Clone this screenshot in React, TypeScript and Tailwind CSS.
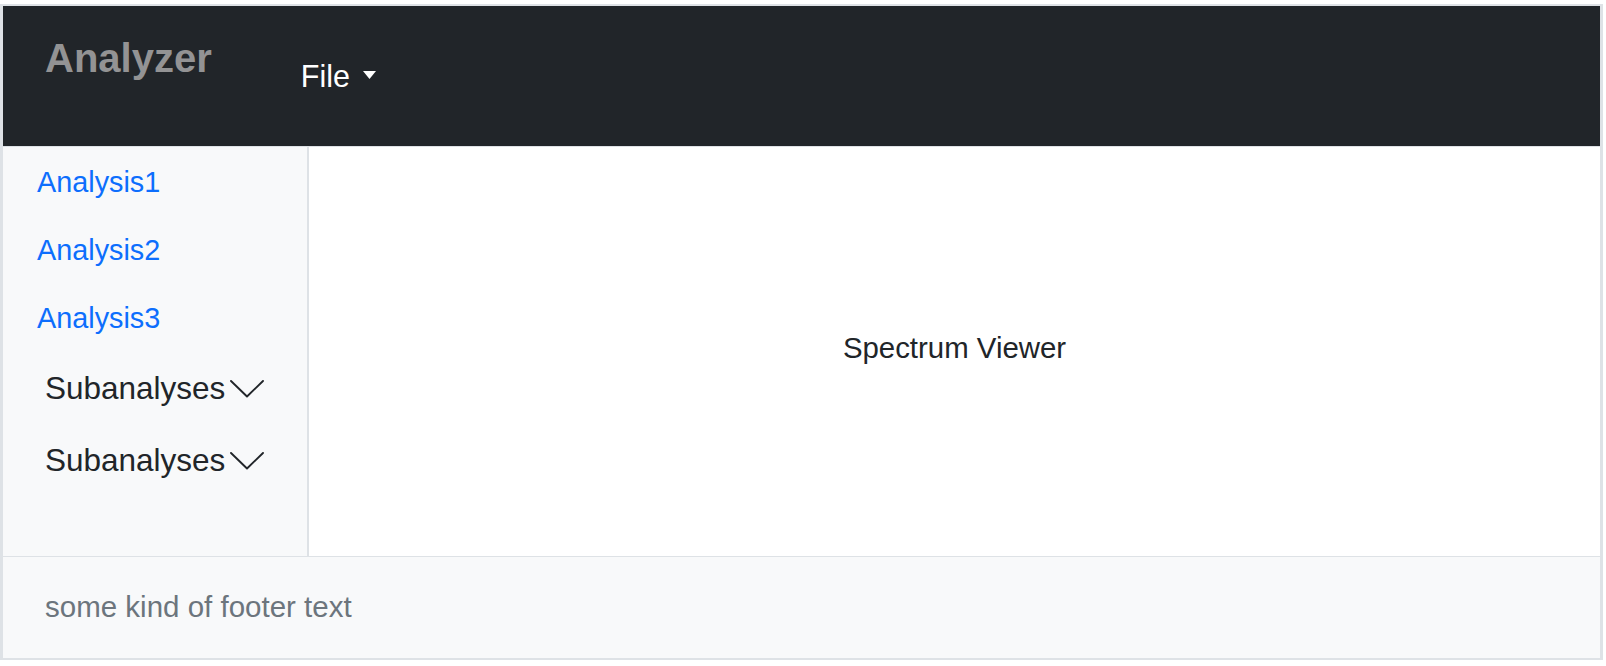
import React from "react";

function Chevron() {
  return (
    <svg width="34" height="18" viewBox="0 0 34 18" fill="none" className="ml-[5px]">
      <path d="M1 1 L17 16.5 L33 1" stroke="#212529" strokeWidth="1.9" strokeLinecap="round" strokeLinejoin="round" />
    </svg>
  );
}

export default function App() {
  const font = { fontFamily: '"Liberation Sans", Arial, Helvetica, sans-serif' };
  return (
    <div className="w-[1606px] h-[666px] bg-white" style={font}>
      <div className="mt-[4px] w-[1603px] border-x-[3px] border-y-2 border-[#dee2e6] flex flex-col">
        <nav className="h-[141px] bg-[#212529] border-b border-[#dee2e6] flex items-center">
          <div className="ml-[42px] mb-[37px] text-[40px] font-bold text-[#939394] leading-none">Analyzer</div>
          <div className="ml-[89px] flex items-center text-white text-[30.5px] leading-none">
            <span>File</span>
            <svg width="13" height="8" viewBox="0 0 13 8" className="ml-[13px] -mt-[3px]">
              <path d="M0 0 L13 0 L6.5 8 Z" fill="white" />
            </svg>
          </div>
        </nav>
        <div className="flex h-[409px]">
          <aside className="w-[306px] bg-[#f8f9fa] border-r-2 border-[#dee2e6] flex flex-col pt-[1px]">
            {["Analysis1", "Analysis2", "Analysis3"].map((a) => (
              <a key={a} href="#" className="h-[68px] flex items-center pl-[34px] text-[28.8px] text-[#0d6efd] leading-none">
                {a}
              </a>
            ))}
            {[0, 1].map((i) => (
              <div key={i} className="h-[72px] flex items-center pl-[42px] text-[31.5px] text-[#212529] leading-none pt-[2px]">
                <span>Subanalyses</span>
                <Chevron />
              </div>
            ))}
          </aside>
          <main className="flex-1 bg-white flex items-center justify-center text-[29.4px] text-[#212529] pb-[6px]">
            Spectrum Viewer
          </main>
        </div>
        <footer className="h-[102px] bg-[#f8f9fa] border-t border-[#dee2e6] flex items-center pl-[42px] text-[29.5px] text-[#6c757d]">
          some kind of footer text
        </footer>
      </div>
    </div>
  );
}
